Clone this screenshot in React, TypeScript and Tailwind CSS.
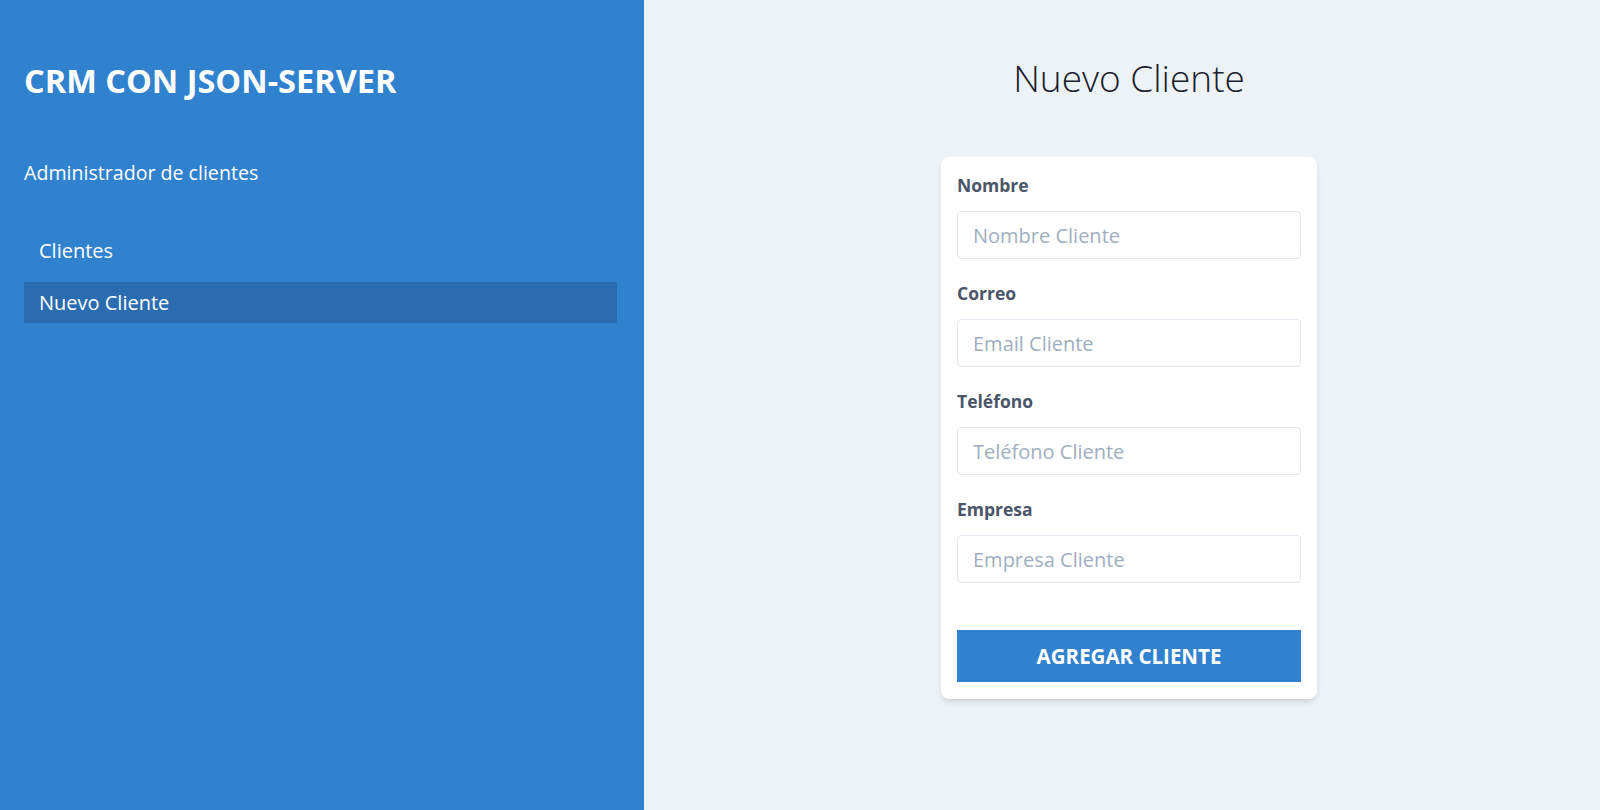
import React from 'react';

const font = { fontFamily: '"Open Sans", "Noto Sans", sans-serif' };

const fields = [
  { id: 'nombre', label: 'Nombre', placeholder: 'Nombre Cliente', type: 'text' },
  { id: 'email', label: 'Correo', placeholder: 'Email Cliente', type: 'email' },
  { id: 'telefono', label: 'Teléfono', placeholder: 'Teléfono Cliente', type: 'tel' },
  { id: 'empresa', label: 'Empresa', placeholder: 'Empresa Cliente', type: 'text' },
];

function Sidebar() {
  return (
    <aside className="w-[644px] shrink-0 bg-[#3182ce] pl-6 pr-[27px] pt-[62px]">
      <h1 className="text-[32.5px] leading-[38px] font-bold text-white">CRM CON JSON-SERVER</h1>
      <p className="mt-[59px] text-[19.6px] leading-[28px] text-white">Administrador de clientes</p>

      <nav className="mt-[43px] flex flex-col gap-[11px]">
        <a href="#" className="h-[41px] flex items-center px-[15px] text-[20px] text-white">
          Clientes
        </a>
        <a href="#" className="h-[41px] flex items-center px-[15px] text-[20px] text-white bg-[#2b6cb0]">
          Nuevo Cliente
        </a>
      </nav>
    </aside>
  );
}

export default function App() {
  return (
    <div className="flex h-[810px] w-[1600px] overflow-hidden" style={font}>
      <Sidebar />

      <main className="flex-1 bg-[#edf2f7] pl-[14px] pt-[55px]">
        <h2 className="text-center text-[37px] leading-[46px] font-light text-[#1a202c]">Nuevo Cliente</h2>

        <div className="mx-auto mt-[56px] w-[376px] rounded-lg bg-white px-4 pt-4 pb-[17px] shadow-md">
          <form className="flex flex-col gap-[22px]">
            {fields.map((f) => (
              <div key={f.id}>
                <label htmlFor={f.id} className="block text-[17.5px] leading-6 font-bold text-[#4a5568]">
                  {f.label}
                </label>
                <input
                  id={f.id}
                  type={f.type}
                  placeholder={f.placeholder}
                  className="mt-[14px] h-12 w-full rounded border border-[#e2e8f0] px-[15px] text-[20px] text-[#4a5568] placeholder:text-[#a0aec0] outline-none"
                />
              </div>
            ))}
          </form>
          <button
            type="button"
            className="mt-[47px] h-[52px] w-full bg-[#3182ce] text-[20.5px] font-bold uppercase text-white"
          >
            Agregar Cliente
          </button>
        </div>
      </main>
    </div>
  );
}
